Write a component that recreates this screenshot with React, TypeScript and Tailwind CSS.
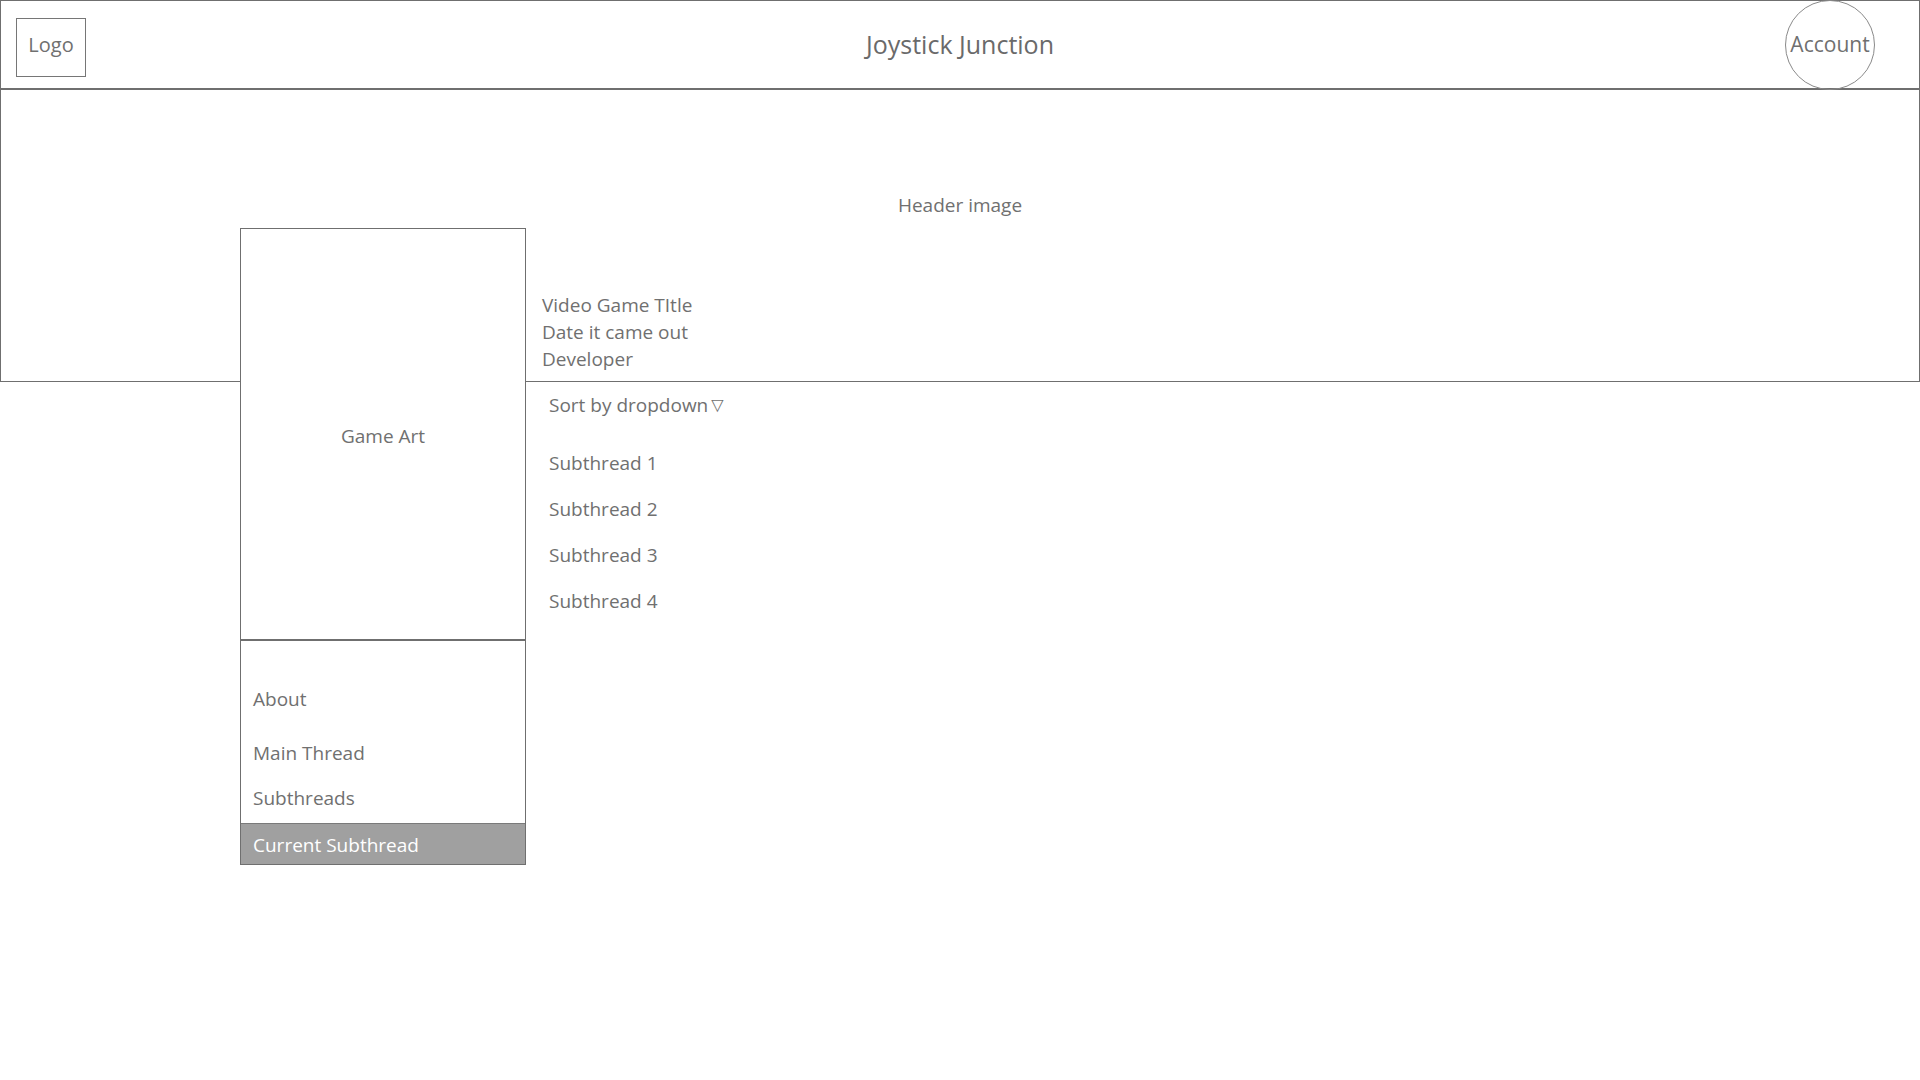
const font = { fontFamily: '"Open Sans", "Noto Sans", sans-serif' };

const subthreads = ["Subthread 1", "Subthread 2", "Subthread 3", "Subthread 4"];

function TopBar() {
  return (
    <header className="h-[89px] border border-[#6f6f6f] grid grid-cols-[1fr_auto_1fr] items-center px-[15px]">
      <div className="self-start mt-[17px] w-[70px] h-[59px] pb-[6px] border border-[#767676] flex items-center justify-center text-[20px] text-[#707070]">
        Logo
      </div>
      <h1 className="text-[25px] text-[#6a6a6a] -mt-[1px]">Joystick Junction</h1>
      <div className="justify-self-end mr-[29px] w-[90px] h-[90px] -mt-[1px] rounded-full border border-[#8a8a8a] flex items-center justify-center text-[21px] text-[#6f6f6f]">
        Account
      </div>
    </header>
  );
}

function Banner() {
  return (
    <section className="h-[293px] border border-[#6f6f6f] flex flex-col">
      <div className="pt-[101px] text-center text-[19px] text-[#707070] leading-[28px]">Header image</div>
      <div className="mt-auto pl-[541px] pb-[8px] text-[19px] leading-[27px] text-[#707070]">
        <div>Video Game TItle</div>
        <div>Date it came out</div>
        <div>Developer</div>
      </div>
    </section>
  );
}

function Sidebar() {
  return (
    <aside className="relative z-10 -mt-[154px] w-[286px] shrink-0 bg-white border border-[#6f6f6f] flex flex-col">
      <div className="h-[412px] pt-[4px] border-b-2 border-[#6f6f6f] flex items-center justify-center text-[19px] text-[#707070]">
        Game Art
      </div>
      <nav className="flex flex-col text-[19px] text-[#707070]">
        <div className="pt-[44px] pl-[12px] leading-[28px]">About</div>
        <div className="pt-[26px] pl-[12px] leading-[28px]">Main Thread</div>
        <div className="pt-[17px] pl-[12px] leading-[28px] pb-[11px]">Subthreads</div>
        <div className="h-[41px] bg-[#a0a0a0] border-t border-[#7a7a7a] text-white pl-[12px] pt-[2px] flex items-center">
          Current Subthread
        </div>
      </nav>
    </aside>
  );
}

export default function App() {
  return (
    <div className="w-[1920px] h-[1080px] bg-white overflow-hidden" style={font}>
      <TopBar />
      <Banner />
      <div className="flex pl-[240px]">
        <Sidebar />
        <main className="pl-[23px] pt-[9px] text-[19px] text-[#707070]">
          <div className="leading-[28px] flex items-center gap-[3px]">
            Sort by dropdown <span className="text-[16px]" style={{ fontFamily: '"DejaVu Sans", sans-serif' }}>▽</span>
          </div>
          <ul className="mt-[30px] flex flex-col gap-[18px]">
            {subthreads.map((s) => (
              <li key={s} className="leading-[28px]">{s}</li>
            ))}
          </ul>
        </main>
      </div>
    </div>
  );
}
